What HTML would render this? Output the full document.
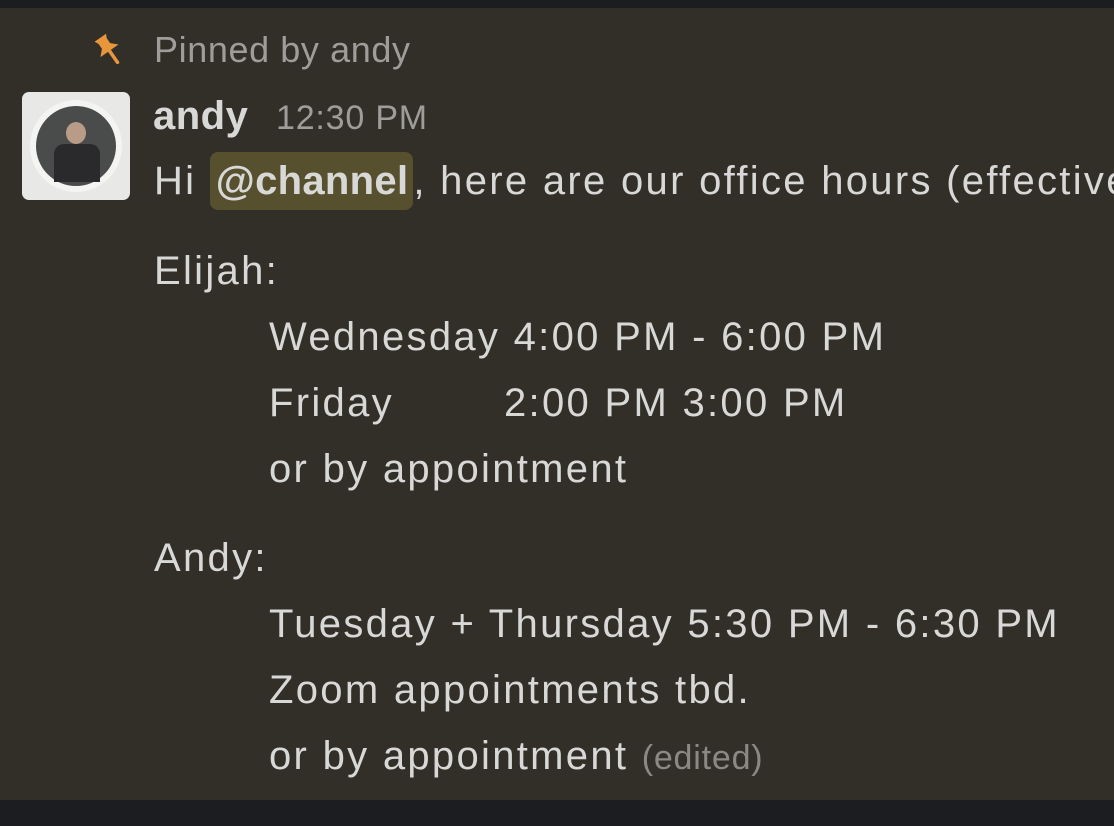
<!DOCTYPE html>
<html><head><meta charset="utf-8"><style>
html,body{margin:0;padding:0;width:1114px;height:826px;overflow:hidden;background:#1b1d21;font-family:"Liberation Sans",sans-serif;}
#main{position:absolute;top:8px;left:0;width:1114px;height:792px;background:#322f29;}
.t{position:absolute;white-space:pre;color:#d8d8d6;font-size:40px;letter-spacing:2.3px;line-height:44px;}
.g{color:#9e9d99;}
.ch{display:inline-block;background:#57502f;border-radius:8px;padding:0 5px 0 6px;height:58px;line-height:58px;vertical-align:middle;margin-top:-14px;position:relative;top:5px;letter-spacing:0.3px;font-weight:bold;}
</style></head><body>
<div id="main"></div>
<svg style="position:absolute;left:92px;top:31px" width="34" height="40" viewBox="0 0 34 40">
<g transform="rotate(-35 16 16)">
<path d="M8 4 H22 L20 8 V14 L26 20 H4 L10 14 V8 Z" fill="#e8963c"/>
<path d="M15 20 V34" stroke="#e8963c" stroke-width="3.5" stroke-linecap="round"/>
</g>
</svg>
<div class="t g" style="left:154px;top:28px;font-size:36px;letter-spacing:0.6px;">Pinned by andy</div>
<div style="position:absolute;left:22px;top:92px;width:108px;height:108px;border-radius:7px;background:#e8e8e6;overflow:hidden">
<div style="position:absolute;left:8px;top:8px;width:92px;height:92px;border-radius:50%;background:#f4f4f2"></div>
<div style="position:absolute;left:14px;top:14px;width:80px;height:80px;border-radius:50%;background:#4a4c4c"></div>
<div style="position:absolute;left:44px;top:30px;width:20px;height:22px;border-radius:50%;background:#b89c88"></div>
<div style="position:absolute;left:32px;top:52px;width:46px;height:38px;border-radius:10px 10px 0 0;background:#2a2a2c"></div>
</div>
<div class="t" style="left:153px;top:94px;font-weight:bold;font-size:40px;letter-spacing:0.5px;">andy</div>
<div class="t g" style="left:276px;top:96px;font-size:34px;letter-spacing:0.8px;">12:30 PM</div>
<div class="t" style="left:154px;top:159px;">Hi <span class="ch">@channel</span>, here are our office hours (effective</div>
<div class="t" style="left:154px;top:249px;">Elijah:</div>
<div class="t" style="left:269px;top:315px;">Wednesday 4:00 PM - 6:00 PM</div>
<div class="t" style="left:269px;top:381px;">Friday</div>
<div class="t" style="left:504px;top:381px;">2:00 PM 3:00 PM</div>
<div class="t" style="left:269px;top:447px;">or by appointment</div>
<div class="t" style="left:154px;top:536px;">Andy:</div>
<div class="t" style="left:269px;top:602px;">Tuesday + Thursday 5:30 PM - 6:30 PM</div>
<div class="t" style="left:269px;top:668px;">Zoom appointments tbd.</div>
<div class="t" style="left:269px;top:734px;">or by appointment <span style="font-size:34px;letter-spacing:0.8px;color:#8a8984">(edited)</span></div>
</body></html>
